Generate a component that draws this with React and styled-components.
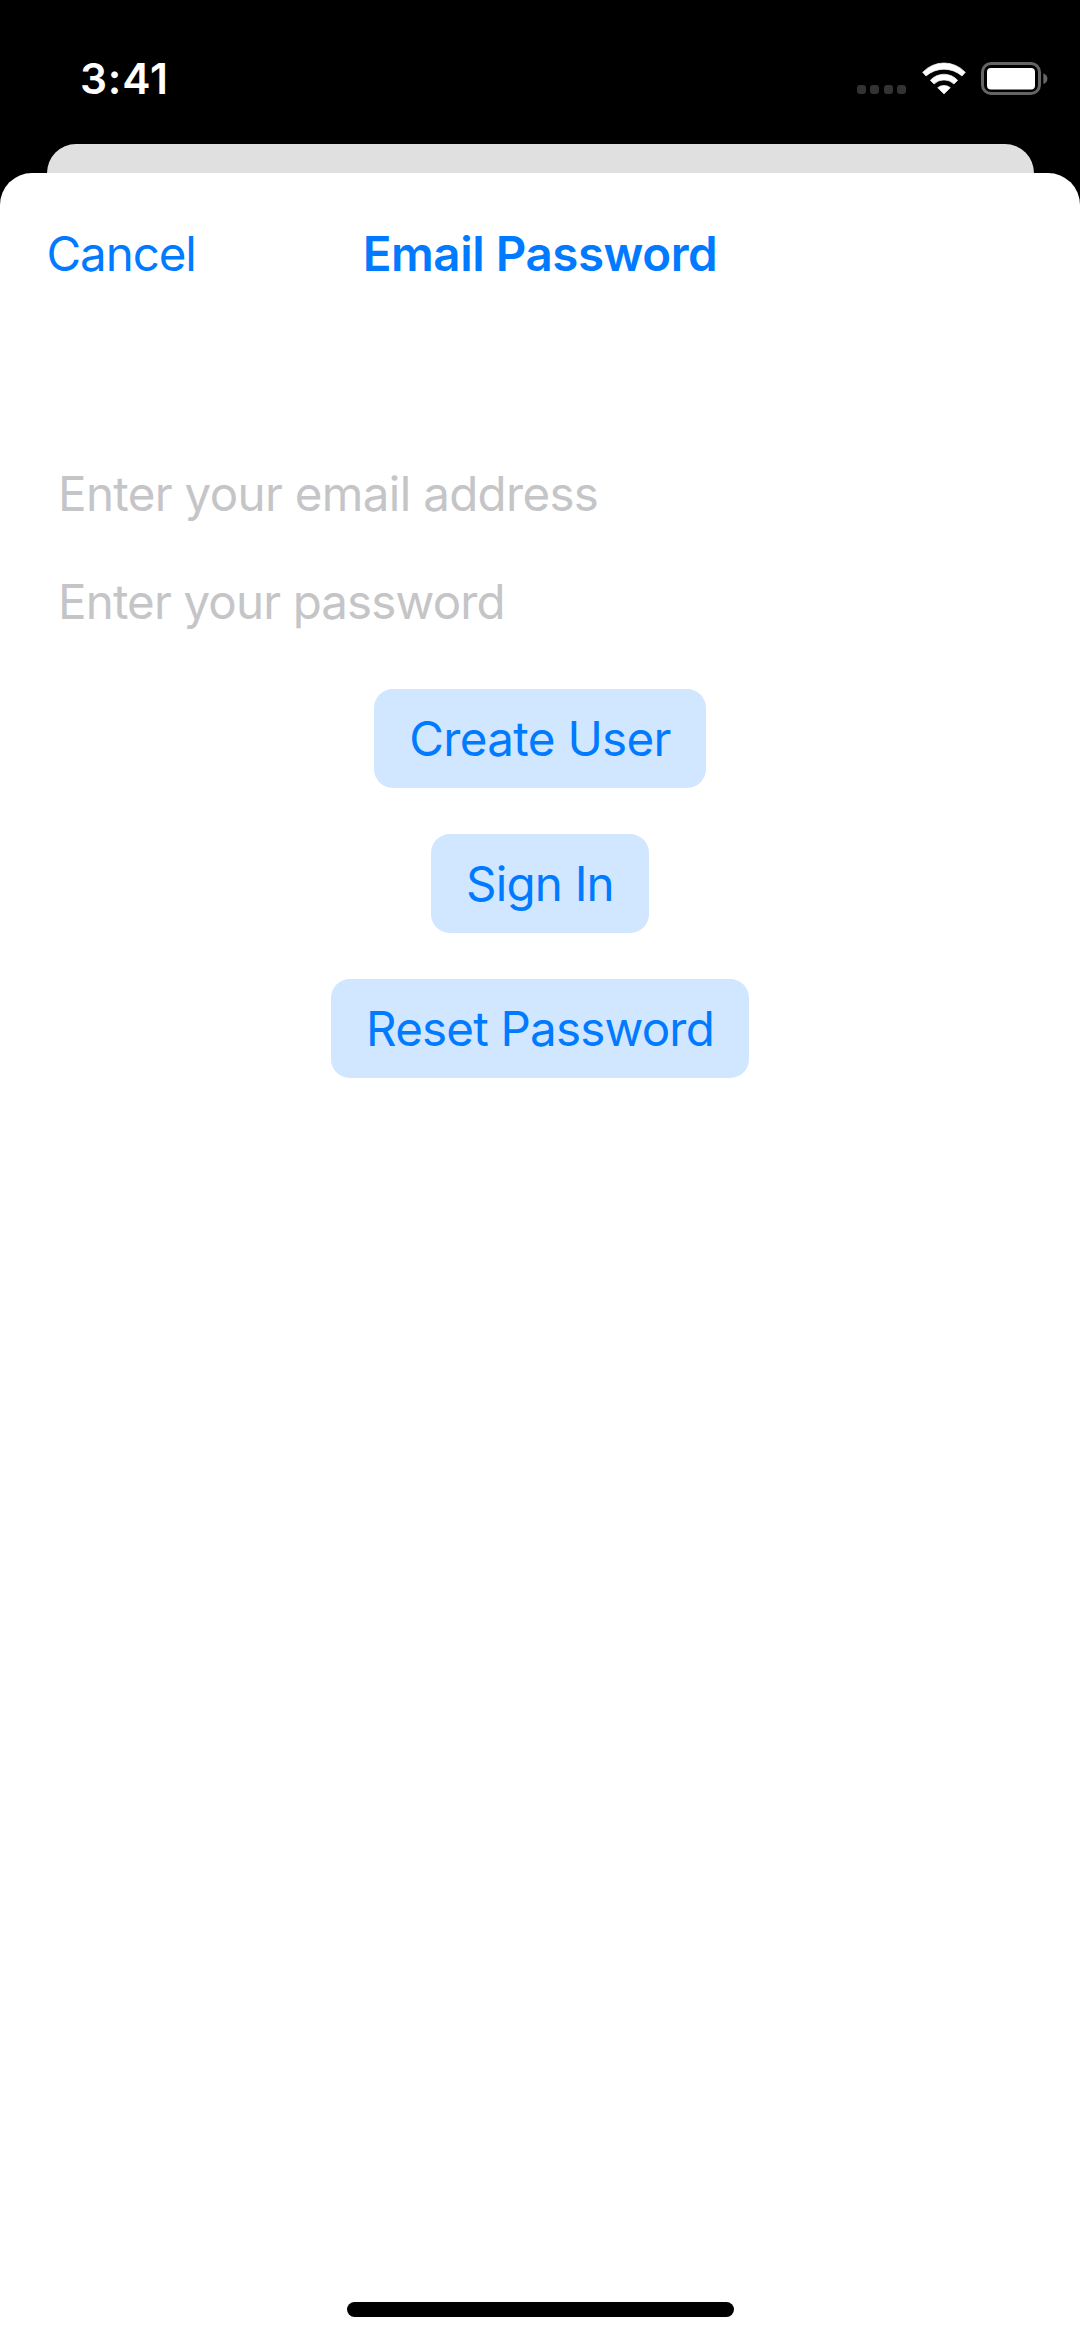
import React from "react";
import styled, { createGlobalStyle } from "styled-components";

const GlobalStyle = createGlobalStyle`
  * { box-sizing: border-box; }
  body { margin: 0; background: #000; }
`;

const Screen = styled.div`
  width: 1080px;
  height: 2340px;
  display: flex;
  flex-direction: column;
  background: #000;
  font-family: Inter, "Liberation Sans", sans-serif;
  font-size: 47.5px;
  line-height: 58px;
  overflow: hidden;
`;

const StatusBar = styled.header`
  height: 144px;
  flex: none;
  display: flex;
  justify-content: space-between;
  align-items: flex-start;
  padding: 54px 32px 0 80px;
`;

const Time = styled.span`
  color: #fff;
  font-size: 42.5px;
  font-weight: 600;
  line-height: 49px;
  letter-spacing: ${(p) => p.$tracking}px;
`;

const Indicators = styled.div`
  display: flex;
  align-items: flex-end;
  padding-top: 8px;
`;

const Dots = styled.div`
  display: flex;
  gap: 4.5px;
  margin: 0 16px 1px 0;
`;

const Dot = styled.i`
  width: 9px;
  height: 9px;
  border-radius: 3px;
  background: #333;
`;

const WifiIcon = styled.svg`
  width: 44px;
  height: 33px;
  margin-right: 15px;
`;

const BatteryIcon = styled.svg`
  width: 67px;
  height: 33px;
`;

const BackCard = styled.div`
  flex: none;
  height: 29px;
  margin: 0 46.5px;
  border-radius: 29px 29px 0 0;
  background: #e0e0e0;
`;

const Sheet = styled.main`
  flex: 1;
  display: flex;
  flex-direction: column;
  background: #fff;
  border-radius: 32px 32px 0 0;
`;

const NavBar = styled.nav`
  display: grid;
  grid-template-columns: 1fr auto 1fr;
  align-items: center;
  padding: 52px 46.5px 0;
  height: 110px;
`;

const Cancel = styled.button`
  justify-self: start;
  border: 0;
  padding: 0;
  background: none;
  color: #007aff;
  font: inherit;
  letter-spacing: ${(p) => p.$tracking}px;
`;

const Title = styled.h1`
  margin: 0;
  color: #007aff;
  font-size: inherit;
  font-weight: 600;
  white-space: nowrap;
  letter-spacing: ${(p) => p.$tracking}px;
`;

const Form = styled.form`
  display: flex;
  flex-direction: column;
  align-items: center;
  padding-top: 182px;
  gap: 46px;
`;

const Fields = styled.div`
  align-self: stretch;
  display: flex;
  flex-direction: column;
  gap: 50px;
  padding: 0 58px;
  margin-bottom: 12px;
`;

const Field = styled.label`
  color: #c5c5c7;
  white-space: nowrap;
  letter-spacing: ${(p) => p.$tracking}px;
`;

const Action = styled.button`
  border: 0;
  padding: 0;
  width: ${(p) => p.$width}px;
  height: 99px;
  border-radius: 19px;
  background: #d1e6ff;
  color: #007aff;
  font: inherit;
  white-space: nowrap;
  letter-spacing: ${(p) => p.$tracking}px;
`;

const HomeIndicator = styled.div`
  width: 387px;
  height: 15px;
  margin: auto auto 23px;
  border-radius: 8px;
  background: #000;
`;

function Wifi() {
  return (
    <WifiIcon viewBox="245 65 132 99" fill="#fff" stroke="#fff" strokeWidth="2" strokeLinejoin="round">
      <path d="M247 96A87 87 0 0 1 375 96L365 107A82 82 0 0 0 257 107Z" />
      <path d="M270 120A55 55 0 0 1 352 120L341 131A43 43 0 0 0 281 131Z" />
      <path d="M292 142A30 30 0 0 1 330 142L311 161Z" />
    </WifiIcon>
  );
}

function Battery() {
  return (
    <BatteryIcon viewBox="0 0 67 33">
      <rect x="1.5" y="1.5" width="57" height="30" rx="8.5" fill="none" stroke="#656565" strokeWidth="3" />
      <rect x="6" y="6" width="48" height="21.5" rx="4" fill="#fff" />
      <path d="M62.3 11.5C67.8 13 67.8 20.5 62.3 22Z" fill="#656565" />
    </BatteryIcon>
  );
}

export default function App() {
  return (
    <Screen>
      <GlobalStyle />
      <StatusBar>
        <Time $tracking={0.8}>3:41</Time>
        <Indicators>
          <Dots>
            <Dot />
            <Dot />
            <Dot />
            <Dot />
          </Dots>
          <Wifi />
          <Battery />
        </Indicators>
      </StatusBar>
      <BackCard />
      <Sheet>
        <NavBar>
          <Cancel $tracking={-1.1}>Cancel</Cancel>
          <Title $tracking={-0.45}>Email Password</Title>
        </NavBar>
        <Form>
          <Fields>
            <Field $tracking={-0.67}>Enter your email address</Field>
            <Field $tracking={-0.87}>Enter your password</Field>
          </Fields>
          <Action type="button" $width={332} $tracking={-0.65}>Create User</Action>
          <Action type="button" $width={218} $tracking={-0.8}>Sign In</Action>
          <Action type="button" $width={418} $tracking={-0.8}>Reset Password</Action>
        </Form>
        <HomeIndicator />
      </Sheet>
    </Screen>
  );
}
